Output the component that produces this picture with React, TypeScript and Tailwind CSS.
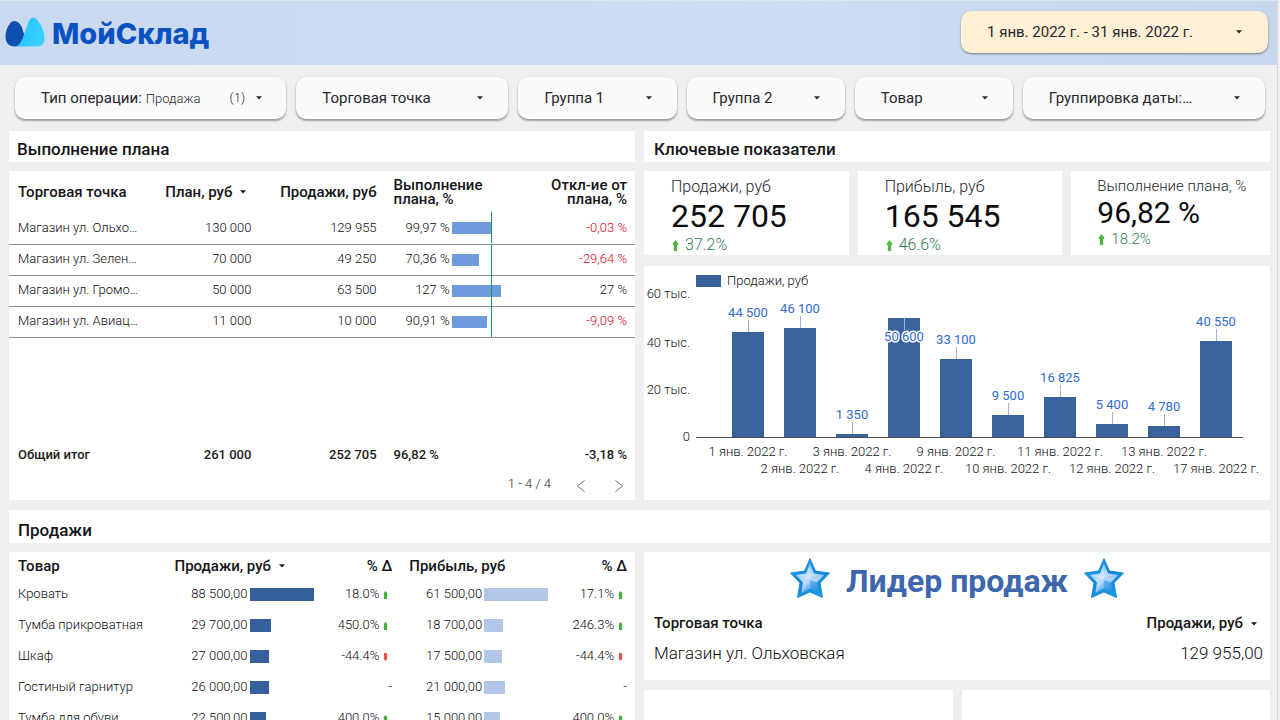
import type { ReactNode } from "react";

const filterBox =
  "relative rounded-[10px] bg-[#fafafa] shadow-[0_2px_2px_rgba(0,0,0,0.32),0_0_2px_rgba(0,0,0,0.12)]";

function Caret({ className = "" }: { className?: string }) {
  return (
    <svg className={`h-1 w-[6px] shrink-0 ${className}`} viewBox="0 0 6 4" fill="currentColor" aria-hidden="true">
      <path d="M0 0.3h6L3 3.5z" />
    </svg>
  );
}

function Logo() {
  return (
    <a href="#" className="flex items-center gap-[7px] text-[#0a52c4]">
      <svg className="h-[30px] w-10" viewBox="0 0 40 30" aria-hidden="true">
        <defs>
          <linearGradient id="sky" x1="0" y1="0" x2="1" y2="0.4">
            <stop offset="0" stopColor="#22c0fb" />
            <stop offset="1" stopColor="#39d0ff" />
          </linearGradient>
        </defs>
        <path
          d="M9.5 4C12.500 4 15 6.500 17 10.500L19 17C19 26 15 29.500 9.500 29.500C4 29.500 0.500 26 0.500 19.500C0.500 12 5 4 9.500 4Z"
          fill="#0f4fb0"
        />
        <path
          d="M10 29.500C14 29 16 25 18 20.500L22 9C24 3.500 25.500 0.500 28 0.500C33 0.500 39.500 13 39.500 21C39.500 27 37 29.500 31 29.500Z"
          fill="url(#sky)"
        />
      </svg>
      <span className="pt-1 font-[Inter,sans-serif] text-[29px] leading-8 font-extrabold">МойСклад</span>
    </a>
  );
}

function FilterSelect({ label }: { label: string }) {
  return (
    <div className={filterBox}>
      <select
        aria-label={label}
        className="h-[42px] w-full appearance-none rounded-[10px] bg-transparent pr-8 pl-[26px] text-[15px] text-[#26262c]"
      >
        <option>{label}</option>
      </select>
      <Caret className="pointer-events-none absolute top-[19px] right-[25px]" />
    </div>
  );
}

function SectionTitle({ children, className = "" }: { children: ReactNode; className?: string }) {
  return (
    <h2 className={`bg-white pl-2 text-[17px] font-medium text-[#151518] ${className}`}>{children}</h2>
  );
}

const planRows = [
  { shop: "Магазин ул. Ольхо…", plan: "130 000", sales: "129 955", pct: "99,97 %", done: 99.97, diff: "-0,03 %" },
  { shop: "Магазин ул. Зелен…", plan: "70 000", sales: "49 250", pct: "70,36 %", done: 70.36, diff: "-29,64 %" },
  { shop: "Магазин ул. Громо…", plan: "50 000", sales: "63 500", pct: "127 %", done: 127, diff: "27 %" },
  { shop: "Магазин ул. Авиац…", plan: "11 000", sales: "10 000", pct: "90,91 %", done: 90.91, diff: "-9,09 %" },
];

function PlanTable() {
  return (
    <div className="flex flex-col bg-white">
      <table className="w-full table-fixed border-collapse text-[13px]">
        <colgroup>
          <col className="w-[22%]" />
          <col className="w-[18%]" />
          <col className="w-[20%]" />
          <col className="w-[20%]" />
          <col className="w-[20%]" />
        </colgroup>
        <thead className="text-[15px] leading-[14px] text-[#151518]">
          <tr className="h-[42px]">
            <th className="pl-[9px] text-left font-medium whitespace-nowrap">Торговая точка</th>
            <th className="pr-[13px] text-right font-medium whitespace-nowrap">
              <span className="inline-flex items-center gap-2">
                План, руб <Caret />
              </span>
            </th>
            <th className="pr-2 text-right font-medium whitespace-nowrap">Продажи, руб</th>
            <th className="pl-[9px] text-left font-medium">
              Выполнение
              <br />
              плана, %
            </th>
            <th className="pr-2 text-right font-medium">
              Откл-ие от
              <br />
              плана, %
            </th>
          </tr>
        </thead>
        <tbody className="font-light text-[#0c0c10]">
          {planRows.map((r) => (
            <tr key={r.shop} className="h-[31px] border-b border-[#8a8c98]">
              <td className="pb-[2px] pl-[9px] whitespace-nowrap">{r.shop}</td>
              <td className="pr-2 pb-[2px] text-right">{r.plan}</td>
              <td className="pr-2 pb-[2px] text-right">{r.sales}</td>
              <td className="p-0 pl-[9px]">
                <div className="flex h-[30px] items-center gap-[2px]">
                  <span className="w-[56px] shrink-0 pb-[2px] text-right whitespace-nowrap">{r.pct}</span>
                  <span className="relative flex h-full flex-1 items-center">
                    <span className="h-3 bg-[#6f9adb]" style={{ width: `${r.done * 0.39}px` }} />
                    <span className="absolute -top-px bottom-0 left-[39px] w-px bg-[#1f9a5c]" />
                  </span>
                </div>
              </td>
              <td className={`pr-2 pb-[2px] text-right ${r.diff.startsWith("-") ? "text-[#e8001c]" : ""}`}>{r.diff}</td>
            </tr>
          ))}
        </tbody>
        <tfoot className="font-medium text-[#1b1b20]">
          <tr>
            <td className="pt-[107px] pl-[9px] leading-5">Общий итог</td>
            <td className="pt-[107px] pr-2 text-right leading-5">261 000</td>
            <td className="pt-[107px] pr-2 text-right leading-5">252 705</td>
            <td className="pt-[107px] pl-[9px] leading-5">96,82 %</td>
            <td className="pt-[107px] pr-2 text-right leading-5">-3,18 %</td>
          </tr>
        </tfoot>
      </table>
      <div className="flex h-[35px] items-center justify-end gap-[22px] pt-1 pr-2 text-[13px]">
        <span className="font-light">1 - 4 / 4</span>
        <button type="button" aria-label="Назад" className="text-[#6d6f80]">
          <svg className="mt-1 h-3 w-4" viewBox="0 0 14 12" fill="none" stroke="currentColor">
            <path d="M10.500 0.500L3.500 6L10.500 11.500" />
          </svg>
        </button>
        <button type="button" aria-label="Вперёд" className="text-[#6d6f80]">
          <svg className="mt-1 h-3 w-4" viewBox="0 0 14 12" fill="none" stroke="currentColor">
            <path d="M3.500 0.500L10.500 6L3.500 11.500" />
          </svg>
        </button>
      </div>
    </div>
  );
}

function UpArrow() {
  return (
    <svg className="h-[11px] w-2" viewBox="0 0 8 11" aria-hidden="true">
      <path d="M4.500 0L7.200 3.500V5H6.200V11H2.800V5H1.800V3.500Z" fill="#4fb944" />
    </svg>
  );
}

function Kpi({ label, value, delta, small = false }: { label: string; value: string; delta: string; small?: boolean }) {
  return (
    <div className={`h-[84px] bg-white pt-1 whitespace-nowrap ${small ? "pl-[26px]" : "pl-[27px]"}`}>
      <div className={small ? "text-[15px] leading-[22px] font-light" : "text-base leading-6 font-light"}>{label}</div>
      <div className={`text-[#0c0c10] ${small ? "text-[30px] leading-8" : "text-[32px] leading-[34px]"}`}>{value}</div>
      <div
        className={`flex items-center gap-[6px] font-light text-[#2f7d52] ${small ? "text-[15px] leading-5" : "text-base leading-6"}`}
      >
        <UpArrow />
        {delta}
      </div>
    </div>
  );
}

const chartData = [
  { day: "1 янв. 2022 г.", value: 44500, label: "44 500" },
  { day: "2 янв. 2022 г.", value: 46100, label: "46 100" },
  { day: "3 янв. 2022 г.", value: 1350, label: "1 350" },
  { day: "4 янв. 2022 г.", value: 50600, label: "50 600" },
  { day: "9 янв. 2022 г.", value: 33100, label: "33 100" },
  { day: "10 янв. 2022 г.", value: 9500, label: "9 500" },
  { day: "11 янв. 2022 г.", value: 16825, label: "16 825" },
  { day: "12 янв. 2022 г.", value: 5400, label: "5 400" },
  { day: "13 янв. 2022 г.", value: 4780, label: "4 780" },
  { day: "17 янв. 2022 г.", value: 40550, label: "40 550" },
];

const ticks = [
  { text: "60 тыс.", y: 32 },
  { text: "40 тыс.", y: 81 },
  { text: "20 тыс.", y: 128 },
  { text: "0", y: 175 },
];

function SalesChart() {
  const base = 171;
  return (
    <div className="bg-white">
      <svg className="h-auto w-full text-[13px] font-light" viewBox="0 0 626 234" role="img" aria-label="Продажи, руб">
        <rect x="52" y="9" width="25" height="12" fill="#3a639c" />
        <text x="83" y="19" fill="#0c0c10">
          Продажи, руб
        </text>
        {ticks.map((t) => (
          <text key={t.text} x="46" y={t.y} textAnchor="end" fill="#111116">
            {t.text}
          </text>
        ))}
        {chartData.map((d, i) => {
          const cx = 104 + i * 52;
          const top = Math.round(base - d.value * 0.00236);
          const inside = d.value > 50000;
          return (
            <g key={d.day}>
              <rect x={cx - 16} y={top} width="32" height={base - top} fill="#3a639c" />
              <rect x={cx} y={inside ? top : top - 12} width="1" height="12" fill="#a3b1de" />
              <text
                x={cx}
                y={inside ? top + 23 : top - 15}
                textAnchor="middle"
                fill="#2f6bd3"
                fontWeight="400"
                stroke={inside ? "#fff" : "none"}
                strokeWidth={inside ? 3 : 0}
                strokeLinejoin="round"
                paintOrder="stroke"
              >
                {d.label}
              </text>
              <text x={cx} y={i % 2 ? 207 : 190} textAnchor="middle" fill="#111116">
                {d.day}
              </text>
            </g>
          );
        })}
        <rect x="52" y="171" width="547" height="1" fill="#4b4b58" />
      </svg>
    </div>
  );
}

type Trend = { text: string; up?: boolean };

const goods: { name: string; sales: string; salesBar: number; st: Trend; profit: string; profitBar: number; pt: Trend }[] = [
  { name: "Кровать", sales: "88 500,00", salesBar: 64, st: { text: "18.0%", up: true }, profit: "61 500,00", profitBar: 64, pt: { text: "17.1%", up: true } },
  { name: "Тумба прикроватная", sales: "29 700,00", salesBar: 21, st: { text: "450.0%", up: true }, profit: "18 700,00", profitBar: 19, pt: { text: "246.3%", up: true } },
  { name: "Шкаф", sales: "27 000,00", salesBar: 19, st: { text: "-44.4%", up: false }, profit: "17 500,00", profitBar: 18, pt: { text: "-44.4%", up: false } },
  { name: "Гостиный гарнитур", sales: "26 000,00", salesBar: 19, st: { text: "-" }, profit: "21 000,00", profitBar: 21, pt: { text: "-" } },
  { name: "Тумба для обуви", sales: "22 500,00", salesBar: 16, st: { text: "400.0%", up: true }, profit: "15 000,00", profitBar: 16, pt: { text: "400.0%", up: true } },
];

function TrendCell({ trend }: { trend: Trend }) {
  return (
    <td className="pr-2 pb-[2px] text-right">
      <span className="inline-flex items-center">
        {trend.text}
        {trend.up !== undefined && (
          <svg className="mt-[2px] h-2 w-[13px]" viewBox="0 0 13 8" aria-hidden="true">
            {trend.up ? (
              <path d="M6.500 0L8.200 2L8 8H5L4.800 2Z" fill="#41b13c" />
            ) : (
              <path d="M5 0H8L8.200 6L6.500 8L4.800 6Z" fill="#ee5247" />
            )}
          </svg>
        )}
      </span>
    </td>
  );
}

function BarCell({ value, bar, tone }: { value: string; bar: number; tone: string }) {
  return (
    <td className="pl-[9px]">
      <div className="flex items-center gap-[2px]">
        <span className="w-[73px] shrink-0 pb-[2px] text-right whitespace-nowrap">{value}</span>
        <span className={`h-[13px] ${tone}`} style={{ width: `${bar}px` }} />
      </div>
    </td>
  );
}

function GoodsTable() {
  return (
    <div className="bg-white">
      <table className="w-full table-fixed border-collapse text-[13px]">
        <colgroup>
          <col className="w-[25%]" />
          <col className="w-[25%]" />
          <col className="w-[12.5%]" />
          <col className="w-[25%]" />
          <col className="w-[12.5%]" />
        </colgroup>
        <thead className="text-[15px] text-[#151518]">
          <tr className="h-[27px] whitespace-nowrap">
            <th className="pt-px pl-[9px] text-left font-medium">Товар</th>
            <th className="pt-px pl-[9px] text-left font-medium">
              <span className="inline-flex items-center gap-2">
                Продажи, руб <Caret />
              </span>
            </th>
            <th className="pt-px pr-2 text-right font-medium">% Δ</th>
            <th className="pt-px pl-[9px] text-left font-medium">Прибыль, руб</th>
            <th className="pt-px pr-2 text-right font-medium">% Δ</th>
          </tr>
        </thead>
        <tbody className="font-light text-[#0c0c10]">
          {goods.map((g) => (
            <tr key={g.name} className="h-[31px]">
              <td className="pb-[2px] pl-[9px] whitespace-nowrap">{g.name}</td>
              <BarCell value={g.sales} bar={g.salesBar} tone="bg-[#35609d]" />
              <TrendCell trend={g.st} />
              <BarCell value={g.profit} bar={g.profitBar} tone="bg-[#b2c7e8]" />
              <TrendCell trend={g.pt} />
            </tr>
          ))}
        </tbody>
      </table>
    </div>
  );
}

function Star() {
  return (
    <svg className="h-10 w-10" viewBox="0 0 40 40" aria-hidden="true">
      <defs>
        <linearGradient id="starEdge" x1="0.2" y1="0" x2="0.7" y2="1">
          <stop offset="0" stopColor="#2aa9ee" />
          <stop offset="0.5" stopColor="#1684dc" />
          <stop offset="1" stopColor="#12a0e8" />
        </linearGradient>
        <linearGradient id="starFace" x1="0.2" y1="0" x2="0.8" y2="1">
          <stop offset="0" stopColor="#6dbcf6" />
          <stop offset="0.45" stopColor="#c3e0fd" />
          <stop offset="1" stopColor="#1f8be2" />
        </linearGradient>
      </defs>
      <path
        d="M20 0.500L25.500 13L39.500 15L30 25L32.500 39.500L20 34L7.500 39.500L10 25L0.500 15L14.500 13Z"
        fill="url(#starEdge)"
        stroke="#0d78cf"
        strokeWidth="0.800"
        strokeLinejoin="round"
      />
      <path d="M20 6L24 15.500L34 17L27 24.500L28.500 35L20 30.500L11.500 35L13 24.500L6 17L16 15.500Z" fill="url(#starFace)" />
      <path d="M20 6L20 22L16 15.500ZM34 17L20 22L27 24.500ZM11.500 35L20 22L13 24.500ZM6 17L20 22L16 15.500Z" fill="#ffffff" opacity="0.250" />
      <path d="M27 24.500L28.500 35L20 30.500L20 22Z" fill="#1b86de" opacity="0.400" />
    </svg>
  );
}

function Leader() {
  return (
    <div className="h-32 bg-white">
      <div className="flex h-[58px] items-center justify-center gap-4 pb-[6px]">
        <Star />
        <h2 className="pt-[6px] text-[32px] leading-10 font-bold text-[#3d66ad]">Лидер продаж</h2>
        <Star />
      </div>
      <table className="w-full border-collapse">
        <thead className="text-[15px] text-[#151518]">
          <tr className="h-[27px]">
            <th className="pl-[10px] text-left font-medium">Торговая точка</th>
            <th className="pr-[13px] text-right font-medium">
              <span className="inline-flex items-center gap-2">
                Продажи, руб <Caret />
              </span>
            </th>
          </tr>
        </thead>
        <tbody>
          <tr className="h-[34px] text-[17px] font-light text-[#0c0c10]">
            <td className="pl-[10px]">Магазин ул. Ольховская</td>
            <td className="pr-[7px] text-right">129 955,00</td>
          </tr>
        </tbody>
      </table>
    </div>
  );
}

export default function App() {
  return (
    <div className="h-screen overflow-y-auto bg-[#efefef] font-[Roboto,sans-serif] text-[#26262c] [scrollbar-width:none]">
      <div className="mr-[2px] border-r border-[#d5d6d8]">
        <header className="flex h-[65px] items-center justify-between border-t border-[#dde4ec] bg-[linear-gradient(90deg,#c9d9f0,#cddcf0_60%,#c7d6ea)] pr-[9px] pb-[2px] pl-[5px]">
          <Logo />
          <button
            type="button"
            aria-haspopup="dialog"
            className="flex h-[42px] w-[307px] items-center justify-between rounded-[10px] bg-[#fef0d5] pr-[26px] pl-[26px] text-[15px] shadow-[0_1px_2px_rgba(0,0,0,0.45)]"
          >
            1 янв. 2022 г. - 31 янв. 2022 г.
            <Caret />
          </button>
        </header>

        <div className="grid grid-cols-[271fr_212fr_158fr_158fr_158fr_242fr] gap-[10px] pt-3 pr-3 pb-3 pl-[15px]">
          <button type="button" aria-haspopup="listbox" className={`${filterBox} flex h-[42px] items-center pr-6 pl-[26px] text-[15px]`}>
            Тип операции:
            <span className="ml-1 flex-1 pt-[2px] text-left text-[13px] font-light">Продажа</span>
            <span className="mr-[11px] text-[13px] font-light">(1)</span>
            <Caret />
          </button>
          <FilterSelect label="Торговая точка" />
          <FilterSelect label="Группа 1" />
          <FilterSelect label="Группа 2" />
          <FilterSelect label="Товар" />
          <FilterSelect label="Группировка даты:…" />
        </div>

        <main className="flex flex-col gap-[9px] pr-[7px] pl-[9px]">
          <div className="grid grid-cols-2 gap-x-[9px] gap-y-[9px] pb-px">
            <SectionTitle className="pt-[6px] leading-[25px]">Выполнение плана</SectionTitle>
            <SectionTitle className="pt-[6px] pl-[10px] leading-[25px]">Ключевые показатели</SectionTitle>
            <PlanTable />
            <div className="flex flex-col gap-[11px]">
              <div className="grid grid-cols-[205fr_205fr_199fr] gap-[9px]">
                <Kpi label="Продажи, руб" value="252 705" delta="37.2%" />
                <Kpi label="Прибыль, руб" value="165 545" delta="46.6%" />
                <Kpi label="Выполнение плана, %" value="96,82 %" delta="18.2%" small />
              </div>
              <SalesChart />
            </div>
          </div>
          <SectionTitle className="pt-[7px] pl-[9px] leading-[26px]">Продажи</SectionTitle>
          <div className="grid grid-cols-2 gap-x-[9px]">
            <GoodsTable />
            <div className="flex flex-col gap-[10px]">
              <Leader />
              <div className="grid flex-1 grid-cols-2 gap-[9px]">
                <div className="bg-white" />
                <div className="bg-white" />
              </div>
            </div>
          </div>
        </main>
      </div>
    </div>
  );
}
